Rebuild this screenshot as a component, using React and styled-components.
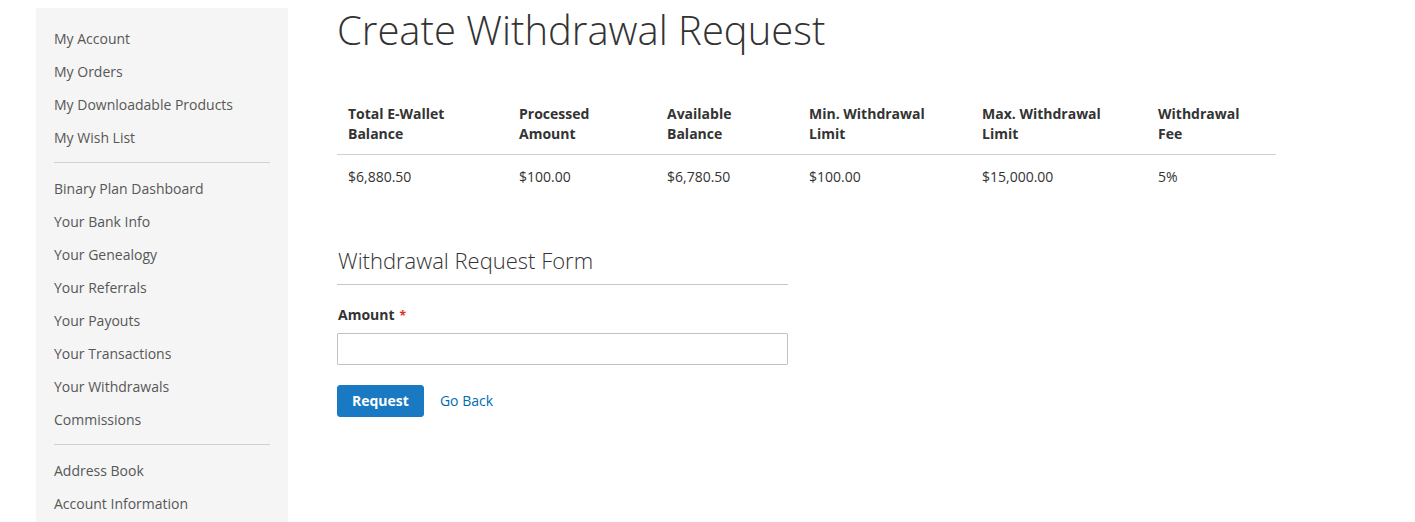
import React from "react";
import styled, { createGlobalStyle } from "styled-components";

const Global = createGlobalStyle`
  html, body { margin: 0; padding: 0; background: #fff; }
  body {
    font-family: "Open Sans", "Helvetica Neue", Helvetica, Arial, sans-serif;
    font-size: 14px;
    line-height: 20px;
    color: #333;
  }
  * { box-sizing: border-box; }
`;

const Page = styled.div`
  display: flex;
  align-items: flex-start;
  padding: 8px 0 0 36px;
  height: 522px;
  overflow: hidden;
`;

const Sidebar = styled.nav`
  width: 252px;
  flex: none;
  background: #f5f5f5;
  padding: 16px 0 20px;
`;

const NavList = styled.ul`
  list-style: none;
  margin: 0;
  padding: 0;
`;

const NavItem = styled.li`
  margin: 0 0 3px;
`;

const NavLink = styled.a`
  display: block;
  padding: 5px 18px;
  color: #575757;
  text-decoration: none;
  font-size: 14px;
  line-height: 20px;
`;

const Delimiter = styled.li`
  border-top: 1px solid #d1d1d1;
  margin: 9px 18px 11px;
`;

const Main = styled.main`
  margin-left: 49px;
  width: 939px;
`;

const Title = styled.h1`
  margin: 0 0 41px;
  font-size: 40px;
  line-height: 44px;
  font-weight: 300;
  color: #333;
`;

const Table = styled.table`
  width: 939px;
  border-collapse: collapse;
  table-layout: fixed;
  margin-bottom: 47px;
`;

const Th = styled.th`
  text-align: left;
  vertical-align: bottom;
  font-weight: 700;
  padding: 11px 10px 10px 11px;
  border-bottom: 1px solid #d1d1d1;
  color: #333;
`;

const Td = styled.td`
  padding: 12px 10px 11px 11px;
  color: #333;
`;

const Form = styled.form`
  width: 451px;
`;

const Legend = styled.div`
  font-size: 22px;
  line-height: 24px;
  font-weight: 300;
  color: #333;
  padding: 3px 0 12px 1px;
  border-bottom: 1px solid #c6c6c6;
  margin-bottom: 20px;
`;

const Label = styled.label`
  display: block;
  font-weight: 700;
  margin-bottom: 7px;
  padding-left: 1px;
  &::after {
    content: "*";
    color: #e02b27;
    font-size: 12px;
    margin-left: 5px;
  }
`;

const Input = styled.input`
  display: block;
  width: 100%;
  height: 32px;
  border: 1px solid #c2c2c2;
  border-radius: 1px;
  background: #fff;
  padding: 0 9px;
  font-family: inherit;
  font-size: 14px;
  margin-bottom: 20px;
`;

const Actions = styled.div`
  display: flex;
  align-items: center;
  gap: 16px;
`;

const Button = styled.button`
  height: 32px;
  padding: 0 14px;
  background: #1979c3;
  border: 1px solid #1979c3;
  border-radius: 3px;
  color: #fff;
  font-family: inherit;
  font-size: 14px;
  font-weight: 700;
  line-height: 20px;
  cursor: pointer;
`;

const BackLink = styled.a`
  color: #006bb4;
  text-decoration: none;
  font-size: 14px;
`;

const groups = [
  ["My Account", "My Orders", "My Downloadable Products", "My Wish List"],
  [
    "Binary Plan Dashboard",
    "Your Bank Info",
    "Your Genealogy",
    "Your Referrals",
    "Your Payouts",
    "Your Transactions",
    "Your Withdrawals",
    "Commissions",
  ],
  ["Address Book", "Account Information"],
];

const columns = [
  { head: ["Total E-Wallet", "Balance"], value: "$6,880.50", w: 171 },
  { head: ["Processed", "Amount"], value: "$100.00", w: 148 },
  { head: ["Available", "Balance"], value: "$6,780.50", w: 142 },
  { head: ["Min. Withdrawal", "Limit"], value: "$100.00", w: 173 },
  { head: ["Max. Withdrawal", "Limit"], value: "$15,000.00", w: 176 },
  { head: ["Withdrawal", "Fee"], value: "5%", w: 129 },
];

export default function App() {
  return (
    <>
      <Global />
      <Page>
        <Sidebar>
          <NavList>
            {groups.map((g, gi) => (
              <React.Fragment key={gi}>
                {gi > 0 && <Delimiter />}
                {g.map((t) => (
                  <NavItem key={t}>
                    <NavLink href="#">{t}</NavLink>
                  </NavItem>
                ))}
              </React.Fragment>
            ))}
          </NavList>
        </Sidebar>
        <Main>
          <Title>Create Withdrawal Request</Title>
          <Table>
            <colgroup>
              {columns.map((c, i) => (
                <col key={i} style={{ width: c.w }} />
              ))}
            </colgroup>
            <thead>
              <tr>
                {columns.map((c, i) => (
                  <Th key={i}>
                    {c.head[0]}
                    <br />
                    {c.head[1]}
                  </Th>
                ))}
              </tr>
            </thead>
            <tbody>
              <tr>
                {columns.map((c, i) => (
                  <Td key={i}>{c.value}</Td>
                ))}
              </tr>
            </tbody>
          </Table>
          <Form onSubmit={(e) => e.preventDefault()}>
            <Legend>Withdrawal Request Form</Legend>
            <Label htmlFor="amount">Amount</Label>
            <Input id="amount" type="text" />
            <Actions>
              <Button type="submit">Request</Button>
              <BackLink href="#">Go Back</BackLink>
            </Actions>
          </Form>
        </Main>
      </Page>
    </>
  );
}
